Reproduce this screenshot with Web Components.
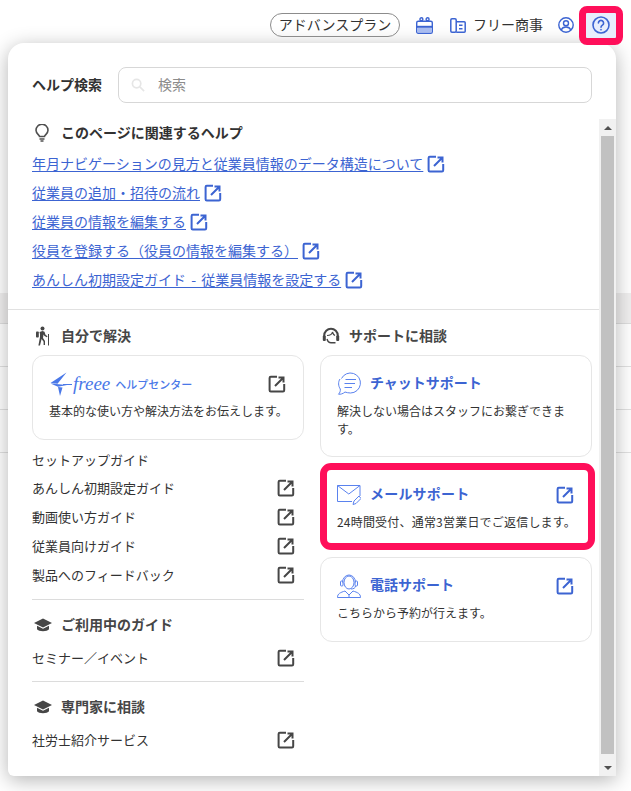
<!DOCTYPE html>
<html lang="ja"><head><meta charset="utf-8">
<style>
html{background:#fff}
html,body{margin:0;padding:0;height:791px;overflow:hidden}
body{font-family:"Noto Sans CJK JP","Liberation Sans",sans-serif;color:#323232;font-size:14px;position:relative}
</style></head><body>
<script>
const def=(n,html)=>{const t=document.createElement('template');t.innerHTML=html;customElements.define(n,class extends HTMLElement{constructor(){super();this.attachShadow({mode:'open'}).append(t.content.cloneNode(true))}})};
def('ext-icon',`<style>:host{display:inline-block;width:18px;height:18px;flex:none;color:#3c64d2}svg{display:block;width:100%;height:100%}</style>
<svg viewBox="0 0 18 18" fill="none" stroke="currentColor" stroke-width="2"><path d="M9 1.800H2.800A1.200 1.200 0 0 0 1.600 3V15.200A1.200 1.200 0 0 0 2.800 16.400H15A1.200 1.200 0 0 0 16.200 15.200V9"/><path d="M10.500 2.500H15.500V7.500M15.500 2.500L7 11"/></svg>`);
def('bg-rows',`<style>:host{display:block;position:absolute;inset:0;z-index:-1}
.b{position:absolute;left:0;right:0;top:293px;height:30px;background:#f0efef;border-bottom:1px solid #dedede}
.l{position:absolute;left:0;right:0;height:1px;background:#e1e1e1}</style>
<div class="b"></div><div class="l" style="top:366px"></div><div class="l" style="top:409px"></div><div class="l" style="top:452px"></div>`);
def('top-bar',`<style>:host{display:flex;align-items:center;justify-content:flex-end;height:24px;padding:13px 15px 6px 0;font-size:14px;color:#323232;position:relative;z-index:2}
.pill{border:1px solid #8c8c8c;border-radius:12px;height:22px;width:128px;display:flex;align-items:center;justify-content:center;font-size:14px;line-height:20px;padding-bottom:2px;box-sizing:border-box;width:130px;height:24px;margin-right:16px}
.i{display:block;flex:none}.co{display:flex;align-items:center;margin-left:17px;gap:7px}
.co span{padding-bottom:2px}
.help{width:30px;height:25px;background:#e8eefc;margin-left:12px;display:flex;align-items:center;justify-content:center;outline:7px solid #ff0f5a;border-radius:1px;flex:none}
.u{margin-left:15px}</style>
<span class="pill">アドバンスプラン</span>
<svg class="i" width="17" height="17" viewBox="0 0 17 17"><g fill="none" stroke="#3c64d2" stroke-width="1.400"><circle cx="5.400" cy="2.200" r="1.500"/><circle cx="11.600" cy="2.200" r="1.500"/><rect x=".7" y="4.200" width="15.600" height="12" rx="1.500"/></g><rect x="1" y="8.800" width="15" height="2" fill="#3c64d2"/><rect x="1.200" y="11" width="14.600" height="4.500" fill="#a9bcf0"/></svg>
<span class="co"><svg class="i" width="16" height="15" viewBox="0 0 16 15" fill="none" stroke="#3c64d2" stroke-width="1.500"><rect x=".8" y=".8" width="5.400" height="13.400" rx="1.200"/><path d="M6.200 3.800h8a1 1 0 0 1 1 1v8.400a1 1 0 0 1-1 1h-8"/><path d="M9 7.300h3.500M9 10.800h3.500"/></svg><span>フリー商事</span></span>
<svg class="i u" width="16" height="16" viewBox="0 0 16 16" fill="none" stroke="#3c64d2" stroke-width="1.400"><circle cx="8" cy="8" r="7.200"/><circle cx="8" cy="6.300" r="2.500"/><path d="M3.200 13c.8-2 2.700-3 4.800-3s4 1 4.800 3"/></svg>
<span class="help"><svg class="i" width="18" height="18" viewBox="0 0 18 18" fill="none" stroke="#3c64d2" stroke-width="1.600"><circle cx="9" cy="9" r="8"/><path d="M6.400 7a2.600 2.600 0 1 1 4 2.200C9.500 9.800 9 10.300 9 11.300" stroke-linecap="round"/><circle cx="9" cy="13.700" r=".6" fill="#3c64d2" stroke-width=".6"/></svg></span>`);
def('help-panel',`<style>:host{display:flex;flex-direction:column;width:608px;height:733px;margin-left:8px;background:#fff;border-radius:16px 16px 0 6px;box-shadow:0 4px 20px rgba(0,0,0,.3);position:relative;box-sizing:border-box;overflow:hidden}
.search{padding:24px 24px 16px;flex:none}
.body{flex:1;display:flex;min-height:0}
.main{flex:1;min-width:0}
</style><div class="search"><slot name="search"></slot></div><div class="body"><div class="main"><slot></slot></div><slot name="bar"></slot></div>`);
def('help-search',`<style>:host{display:flex;align-items:center}
b{font-size:14px;font-weight:700;width:86px;color:#323232;padding-bottom:2px}
.box{flex:1;height:36px;border:1px solid #d7d7d7;border-radius:8px;box-sizing:border-box;display:flex;align-items:center;color:#8c8c8c;font-size:14px;padding-left:12px;gap:13px}
.box span{padding-bottom:2px}</style>
<b>ヘルプ検索</b><div class="box"><svg width="14" height="14" viewBox="0 0 15 15" fill="none" stroke="#e6e6e6" stroke-width="1.800"><circle cx="6" cy="6" r="4.500"/><path d="M9.500 9.500L14 14"/></svg><span>検索</span></div>`);
def('scroll-bar',`<style>:host{display:flex;flex-direction:column;width:17px;background:#f1f1f1;flex:none;align-items:center}
.a{height:17px;width:100%;display:flex;align-items:center;justify-content:center;flex:none}
.t{flex:1;width:13px;background:#c1c1c1;margin-bottom:5px}
i{display:block;width:0;height:0;border-left:4px solid transparent;border-right:4px solid transparent}
.up{border-bottom:4px solid #505050}.dn{border-top:4px solid #505050}</style>
<div class="a"><i class="up"></i></div><div class="t"></div><div class="a"><i class="dn"></i></div>`);
def('related-help',`<style>:host{display:block;padding:0 24px;height:191px;box-sizing:border-box;border-bottom:1px solid #e1e1e1}
.h{display:flex;align-items:center;height:28px;font-weight:700;font-size:14px;gap:12px;padding-left:3px;margin-bottom:2px}
.h span{padding-bottom:2px}
svg{display:block}</style><div class="h"><svg width="14" height="18" viewBox="0 0 14 18" fill="none" stroke="#505050" stroke-width="1.600"><path d="M4.500 12.500C4.300 10.800 1 9.800 1 6.300a6 6 0 0 1 12 0c0 3.500-3.300 4.500-3.500 6.200z"/><path d="M4.500 15h5M5.500 17h3"/></svg><span>このページに関連するヘルプ</span></div><slot></slot>`);
def('help-link',`<style>:host{display:flex;align-items:center;height:29px;gap:4px;font-size:14px;color:#3c64d2}
a{color:inherit;text-decoration:underline;text-underline-offset:2px;margin-bottom:2px}</style><a><slot></slot></a><ext-icon></ext-icon>`);
def('two-cols',`<style>:host{display:grid;grid-template-columns:272px 272px;column-gap:16px;padding:12px 24px 0;align-items:start}
.c{display:flex;flex-direction:column;min-width:0}</style><div class="c"><slot name="l"></slot></div><div class="c"><slot name="r"></slot></div>`);
def('col-title',`<style>:host{display:flex;align-items:center;height:27px;gap:9px;font-weight:700;font-size:14px;color:#464646;padding-left:2px}
span{padding-bottom:2px}
::slotted(svg){display:block;flex:none}</style><slot name="i"></slot><span><slot></slot></span>`);
def('help-card',`<style>:host{display:block;border:1px solid #e6e6e6;border-radius:12px;padding:15px 14px 0 16px;box-sizing:border-box;background:#fff;flex:none}
.top{display:flex;align-items:center;height:26px;margin-right:3px}.t{flex:1;font-weight:700;font-size:14px;color:#3c64d2;display:flex;align-items:center;gap:9px}
.tt{padding-bottom:5px;display:block}
.d{font-size:12px;line-height:18px;color:#323232;margin-top:5px}
:host([hl]){border:7px solid #ff0f5a;margin-right:-3px;padding:12px 11px 0 10px;border-radius:11px}
::slotted(svg){display:block;flex:none}
</style><div class="top"><div class="t"><slot name="i"></slot><span class="tt"><slot name="title"></slot></span></div><slot name="ext"></slot></div><div class="d"><slot></slot></div>`);
def('guide-row',`<style>:host{display:flex;align-items:center;justify-content:space-between;height:29px;font-size:13px;color:#323232;flex:none}
ext-icon{color:#464646;margin-right:9px}</style><span><slot></slot></span><ext-icon></ext-icon>`);
def('guide-head',`<style>:host{display:flex;align-items:center;height:28px;font-size:13px;color:#323232;margin-top:5px}</style><slot></slot>`);
def('h-rule',`<style>:host{display:block;height:1px;background:#dcdcdc;flex:none}</style>`);
</script>

<bg-rows></bg-rows>
<top-bar></top-bar>
<help-panel>
  <help-search slot="search"></help-search>
  <div>
    <related-help>
      <help-link>年月ナビゲーションの見方と従業員情報のデータ構造について</help-link>
      <help-link>従業員の追加・招待の流れ</help-link>
      <help-link>従業員の情報を編集する</help-link>
      <help-link>役員を登録する（役員の情報を編集する）</help-link>
      <help-link style="word-spacing:2px">あんしん初期設定ガイド - 従業員情報を設定する</help-link>
    </related-help>
    <two-cols>
      <col-title slot="l"><svg slot="i" width="18" height="20" viewBox="0 0 18 20" fill="#464646"><circle cx="8.500" cy="2.500" r="2"/><path d="M5.500 6l3-1 2 .8 1 3 2 1.400-.6 1.100-2.400-1.400-1-1.500-.5 3.600 2 3v3.900H9.600v-3.200L7.600 13 6 19.400H4.400L6 11V8z"/><rect x="14" y="8" width="1" height="11.500"/><rect x="2" y="5.500" width="2.800" height="6" rx=".8"/></svg>自分で解決</col-title>
      <help-card slot="l" style="height:85px;margin-top:6px">
        <span slot="title" style="display:flex;align-items:center;margin-left:1px;height:26px;color:#4a78e8;margin-top:5px">
          <svg width="22" height="24" viewBox="0 0 22 24" fill="#4a78e8" style="display:block;flex:none"><path d="M16.500.5L.5 11 7.500 11.800zM.5 11.500L17 13 8 14.800zM8 15L10 24 12.500 15.500z"/><path d="M13 12.500H22" stroke="#4a78e8" fill="none"/></svg>
          <span style="font:italic 400 19px 'Liberation Serif',serif;margin:0 5px 0 1px">freee</span>
          <span style="font-size:11px;font-weight:500">ヘルプセンター</span>
        </span>
        <ext-icon slot="ext" style="color:#464646"></ext-icon>
        基本的な使い方や解決方法をお伝えします。
      </help-card>
      <guide-head slot="l">セットアップガイド</guide-head>
      <guide-row slot="l">あんしん初期設定ガイド</guide-row>
      <guide-row slot="l">動画使い方ガイド</guide-row>
      <guide-row slot="l">従業員向けガイド</guide-row>
      <guide-row slot="l">製品へのフィードバック</guide-row>
      <h-rule slot="l" style="margin-top:10px"></h-rule>
      <col-title slot="l" style="margin-top:11px"><svg slot="i" width="18" height="14" viewBox="0 0 18 14" fill="#464646"><path d="M9 .5L18 5 9 9.500 0 5z"/><path d="M3 7.800V11.200c1.500 2.600 10.500 2.600 12 0V7.800L9 10.800z"/></svg>ご利用中のガイド</col-title>
      <guide-row slot="l" style="margin-top:5px">セミナー／イベント</guide-row>
      <h-rule slot="l" style="margin-top:9px"></h-rule>
      <col-title slot="l" style="margin-top:11px"><svg slot="i" width="18" height="14" viewBox="0 0 18 14" fill="#464646"><path d="M9 .5L18 5 9 9.500 0 5z"/><path d="M3 7.800V11.200c1.500 2.600 10.500 2.600 12 0V7.800L9 10.800z"/></svg>専門家に相談</col-title>
      <guide-row slot="l" style="margin-top:5px">社労士紹介サービス</guide-row>

      <col-title slot="r"><svg slot="i" width="18" height="18" viewBox="0 0 18 18" fill="none" stroke="#464646" stroke-width="2"><path d="M2.200 10V8.500a6.800 6.800 0 0 1 13.600 0V10"/><rect x=".8" y="8.500" width="3" height="5.500" rx="1" fill="#464646" stroke="none"/><rect x="14.200" y="8.500" width="3" height="5.500" rx="1" fill="#464646" stroke="none"/><path d="M5 8.500c2.500 0 5-1 5.500-3.500C11 7 12 8 13 8.500" stroke-width="1.200"/><path d="M5 12c.6 2 2 3.800 4 3.800h4.500" stroke-width="1.400"/></svg>サポートに相談</col-title>
      <help-card slot="r" style="height:102px;margin-top:6px">
        <svg slot="i" width="24" height="24" viewBox="0 0 24 24" fill="none" stroke="#5a82ee"><path d="M4.500 6.500A10 10 0 1 1 13.500 21C11.500 21 9.500 20.500 8 20C6 21.800 3.500 22.500 1.500 22.200C3 20.800 3.500 19 3.300 17C1.200 14 1 9.800 3 7"/><path d="M8.500 7.500H19M7.500 11.500H18M7.500 15.500H15"/></svg>
        <span slot="title">チャットサポート</span>
        解決しない場合はスタッフにお繋ぎできます。
      </help-card>
      <help-card slot="r" hl style="height:87px;margin-top:6px;letter-spacing:.2px">
        <svg slot="i" width="24" height="20" viewBox="0 0 24 20" fill="none" stroke="#5a82ee"><path d="M15 16.500H.5V.5h22.500V11"/><path d="M.5.500L11.800 9 23 .5"/><path d="M16 19.500L17 16 22 11 24 13.500 19 18.500z" fill="#fff"/></svg>
        <span slot="title">メールサポート</span>
        <ext-icon slot="ext"></ext-icon>
        24時間受付、通常3営業日でご返信します。
      </help-card>
      <help-card slot="r" style="height:85px;margin-top:7px">
        <svg slot="i" width="24" height="24" viewBox="0 0 24 24" fill="none" stroke="#5a82ee"><ellipse cx="12" cy="8.500" rx="5" ry="6.500"/><path d="M5.500 8.500a6.500 7.500 0 0 1 13 0"/><rect x="3.500" y="7" width="2.500" height="5" rx="1"/><rect x="18" y="7" width="2.500" height="5" rx="1"/><path d="M18.500 12c0 2-2 3-4.500 3"/><path d="M.5 23.500c0-4 3-5 7.500-6.500l4 4 4-4c4.500 1.500 7.500 2.500 7.500 6.500zM12 21v2.500"/></svg>
        <span slot="title">電話サポート</span>
        <ext-icon slot="ext"></ext-icon>
        こちらから予約が行えます。
      </help-card>
    </two-cols>
  </div>
  <scroll-bar slot="bar"></scroll-bar>
</help-panel>
</body></html>
